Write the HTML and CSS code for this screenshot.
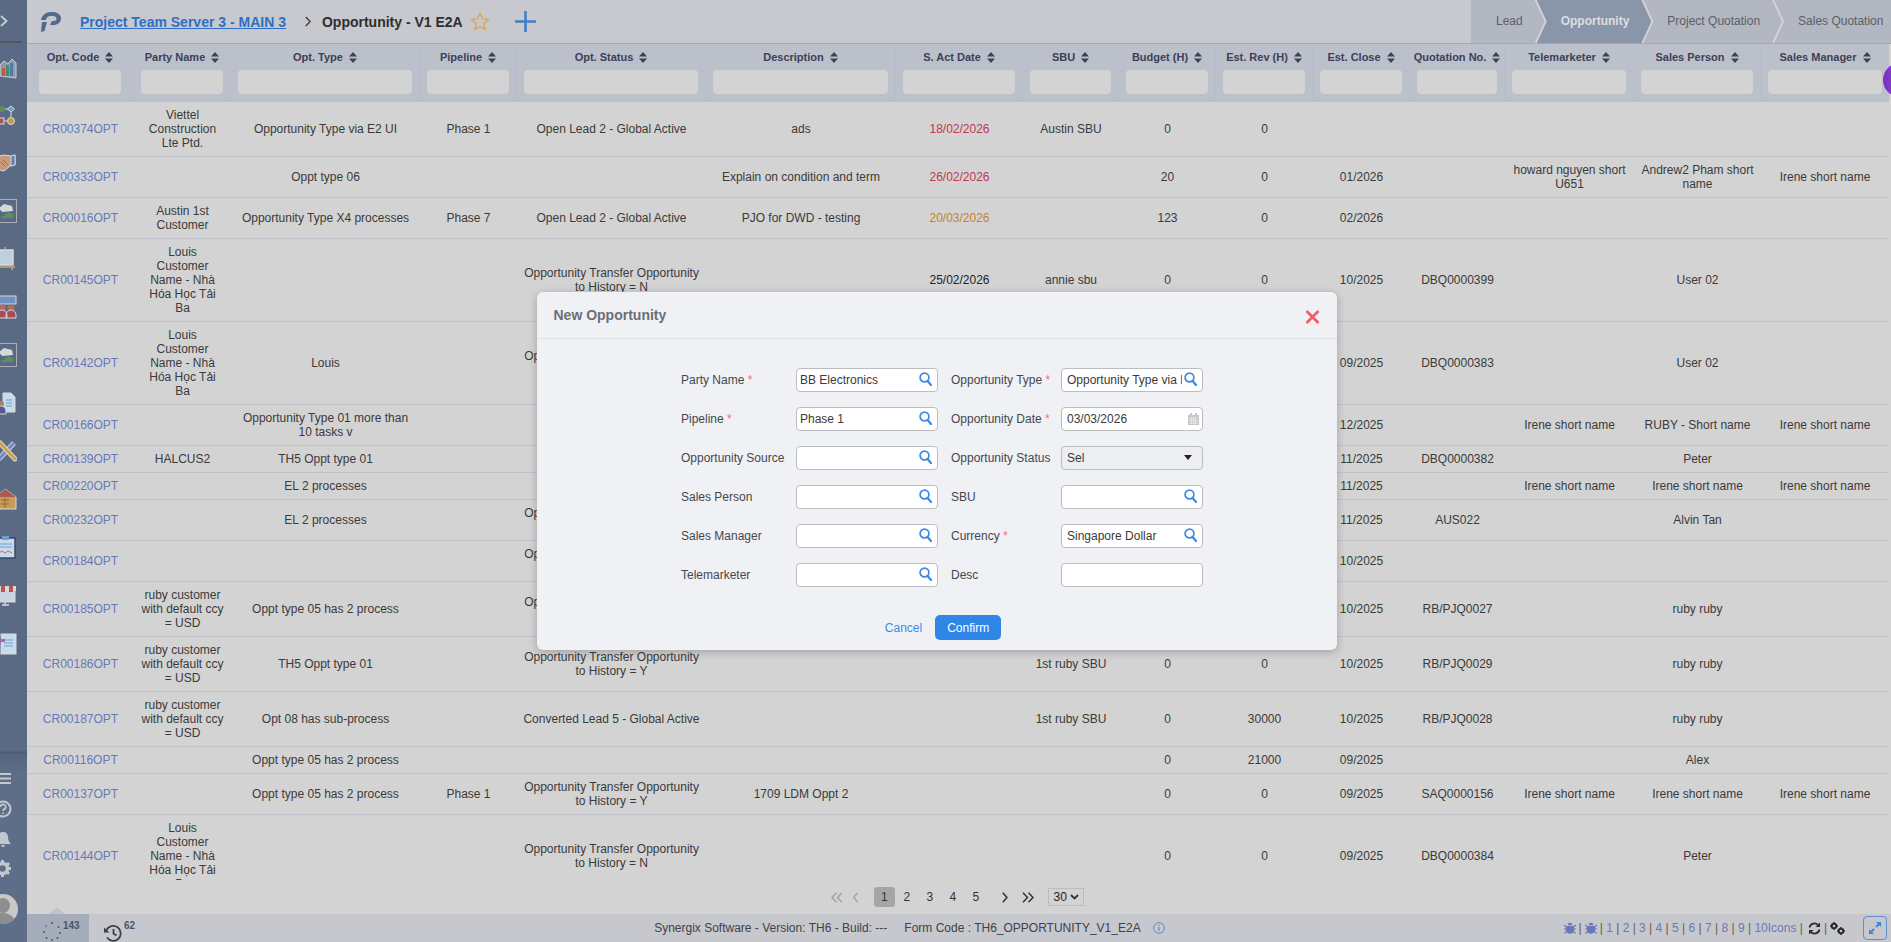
FILE: index.html
```html
<!DOCTYPE html>
<html lang="en">
<head>
<meta charset="utf-8">
<title>Opportunity - V1 E2A</title>
<link rel="stylesheet" href="styles.css">
</head>
<body>
<svg class="defs" width="0" height="0" aria-hidden="true">
  <symbol id="sort" viewBox="0 0 8 11"><path d="M4 0 8 4.6H0ZM4 11 0 6.4H8Z"/></symbol>
  <symbol id="search" viewBox="0 0 13 14"><circle cx="5.500" cy="5.500" r="4.400" fill="none" stroke="currentColor" stroke-width="1.700"/><path d="M8.400 8.800 12 13" fill="none" stroke="currentColor" stroke-width="2.200" stroke-linecap="round"/></symbol>
  <symbol id="bug" viewBox="0 0 12 12"><path d="M3.600 3.200a2.400 2.400 0 0 1 4.800 0ZM2.800 4h6.400c.6 0 1 .5 1 1v2.500a4.200 4.200 0 0 1-8.400 0V5c0-.5.4-1 1-1Z"/><path d="M0 3l2.500 2M12 3 9.500 5M0 7h2.500M12 7H9.500M.5 11.500 3 9M11.500 11.500 9 9" fill="none" stroke="currentColor" stroke-width="1.200"/></symbol>
</svg>
<div class="app">
  <aside class="sidebar">
    <div class="side-top">
      <svg class="side-arrow" width="8" height="12" viewBox="0 0 8 12"><path d="M1 1l5.500 5L1 11" fill="none" stroke="#c3c7cf" stroke-width="2"/></svg>
    </div>
    <div class="side-list">
      <div class="side-slot"><svg viewBox="0 0 24 24" width="24" height="24"><path d="M7 21V10l4-4 4 3 4-5 4 4v15Z" fill="#8f99aa" stroke="#c9ccd3"/><path d="M9 21v-8h3v8Z" fill="#b45a50"/><path d="M13 21v-11h3v11Z" fill="#4a8a62"/><path d="M17 21v-13h3v13Z" fill="#4d7bb0"/></svg></div>
      <div class="side-slot"><svg viewBox="0 0 24 24" width="24" height="24"><path d="M8 6h9M18 9v7M8 18h6" stroke="#d6d8dc" fill="none"/><circle cx="9" cy="6" r="3" fill="#5f8f5e"/><path d="M18 3l3.500 3-3.500 3-3.500-3Z" fill="#6f9fcf" stroke="#d6d8dc"/><rect x="5" y="15" width="6" height="6" fill="#b4504a" stroke="#d6d8dc"/><circle cx="18" cy="18" r="3.500" fill="#c99b3f" stroke="#d6d8dc"/></svg></div>
      <div class="side-slot"><svg viewBox="0 0 24 24" width="24" height="24"><path d="M2 6l9-2 7 1 4-1v10l-5 1-6 5-4-1-5-5Z" fill="#c99a78" stroke="#d5d7dc"/><path d="M18 5l4-1v10l-4 1Z" fill="#5a7fb8" stroke="#d5d7dc"/><path d="M8 11l4 4M10 9l5 5" stroke="#9c7355" fill="none"/></svg></div>
      <div class="side-slot"><svg viewBox="0 0 24 24" width="24" height="24"><rect x="0.500" y="0.500" width="23" height="23" fill="none" stroke="#a8adb6"/><path d="M6 9l5-4 8 2 1 5-11 1Z" fill="#d6d8dc"/><path d="M7 19l9-6 4 2v4Z" fill="#5e8f5c"/></svg></div>
      <div class="side-slot"><svg viewBox="0 0 24 24" width="24" height="24"><path d="M4 3h16v15H4Z" fill="#bcd0e0" stroke="#d8dade" stroke-width="1.500"/><path d="M12 0v3M5 18v5M19 18v5M2 20h20" stroke="#c9a56a" stroke-width="1.500" fill="none"/></svg></div>
      <div class="side-slot"><svg viewBox="0 0 24 24" width="24" height="24"><rect x="4" y="1" width="19" height="8" fill="#6f94c2" stroke="#d5d7dc"/><circle cx="9" cy="13" r="3.500" fill="#b46a5e"/><circle cx="18" cy="13" r="3.500" fill="#b46a5e"/><path d="M4 23v-3a4 4 0 0 1 10 0v3ZM13 23v-3a4 4 0 0 1 10 0v3Z" fill="#a94c55" stroke="#d5d7dc"/></svg></div>
      <div class="side-slot"><svg viewBox="0 0 24 24" width="24" height="24"><rect x="0.500" y="0.500" width="23" height="23" fill="none" stroke="#a8adb6"/><path d="M6 9l5-4 8 2 1 5-11 1Z" fill="#d6d8dc"/><path d="M7 19l9-6 4 2v4Z" fill="#5e8f5c"/></svg></div>
      <div class="side-slot"><svg viewBox="0 0 24 24" width="24" height="24"><path d="M10 2h8l4 4v15H10Z" fill="#c8dbea" stroke="#d8dade"/><path d="M13 9h6M13 12h6M13 15h6" stroke="#6f9fcf"/><circle cx="8" cy="13" r="3" fill="#b47a5e"/><path d="M3 23v-3a5 5 0 0 1 10 0v3Z" fill="#4f5f95" stroke="#d5d7dc"/></svg></div>
      <div class="side-slot"><svg viewBox="0 0 24 24" width="24" height="24"><path d="M21 4 6 20" stroke="#d6d8dc" stroke-width="5"/><path d="M21 4 6 20" stroke="#6f86c9" stroke-width="3"/><path d="M7 4l15 16" stroke="#d6d8dc" stroke-width="5" stroke-linecap="round"/><path d="M7 4l15 16" stroke="#c9a34a" stroke-width="3" stroke-linecap="round"/></svg></div>
      <div class="side-slot"><svg viewBox="0 0 24 24" width="24" height="24"><path d="M12 2 23 10v12H3V10Z" fill="#c99a58" stroke="#d8dade"/><path d="M12 2 23 10H3Z" fill="#a85c4c"/><path d="M8 13h8M8 17h8M12 11v10" stroke="#8d6a3c"/></svg></div>
      <div class="side-slot"><svg viewBox="0 0 24 24" width="24" height="24"><rect x="3" y="3" width="19" height="20" fill="#c8dbea" stroke="#3c4668" stroke-width="1.500"/><rect x="9" y="1" width="7" height="4" fill="#6f9fcf"/><path d="M6 9h13M6 12h13" stroke="#6f9fcf"/><path d="M6 18l3-2 3 2 3-2 4 2" fill="none" stroke="#c56a6a"/></svg></div>
      <div class="side-slot"><svg viewBox="0 0 24 24" width="24" height="24"><rect x="3" y="6" width="19" height="13" fill="#c8d4e0" stroke="#d8dade"/><path d="M3 3h20v5H3Z" fill="#d6d8dc"/><path d="M8 3h4v6H8ZM16 3h4v6h-4Z" fill="#c0544c"/><path d="M9 22h7M12 19v3" stroke="#d8dade" stroke-width="1.500"/></svg></div>
      <div class="side-slot"><svg viewBox="0 0 24 24" width="24" height="24"><rect x="8" y="3" width="15" height="20" fill="#c8dbea" stroke="#d8dade"/><path d="M11 9h9M11 12h9M11 15h9" stroke="#6f9fcf"/><path d="M3 9l5-4v3h4v3H8v3Z" fill="#9a6fb0"/></svg></div>
    </div>
    <div class="side-bottom">
      <svg class="side-tool" width="11" height="13" viewBox="0 0 11 13"><path d="M0 2h11M0 6.500h11M0 11h11" stroke="#c3c7cf" stroke-width="2"/></svg>
      <svg class="side-tool" width="12" height="18" viewBox="0 0 12 18"><circle cx="3" cy="9" r="7.500" fill="none" stroke="#c3c7cf" stroke-width="2"/><path d="M.5 7a2.600 2.600 0 1 1 3.500 2.400c-.8.4-1 .8-1 1.600M3 12.500v1.500" fill="none" stroke="#c3c7cf" stroke-width="1.800"/></svg>
      <svg class="side-tool" width="11" height="15" viewBox="0 0 11 15"><path d="M3 0c3 0 5 2 5 5 0 3 1 5 3 7H-5c2-2 3-4 3-7 0-3 2-5 5-5ZM1 13h4a2 2 0 0 1-4 0Z" fill="#c3c7cf"/></svg>
      <svg class="side-tool" width="11" height="17" viewBox="0 0 11 17"><circle cx="2.500" cy="8.500" r="5" fill="none" stroke="#c3c7cf" stroke-width="3.500"/><path d="M2.500 0v3M2.500 14v3M11 8.500H8M9 3 7 5M9 14l-2-2" stroke="#c3c7cf" stroke-width="3"/></svg>
      <div class="avatar"><div class="avatar-head"></div><div class="avatar-body"></div></div>
    </div>
  </aside>

  <main class="main">
    <header class="topbar">
      <svg class="logo" width="20" height="20" viewBox="0 0 20 20"><path d="M0 8C1 3 5 0 10 0h2c4 0 8 2.500 8 6.500S16.500 13 12.500 13H9l2-4h2c1.500 0 2.500-1 2.500-2.300S14 4 12 4H9.500C7 4 5.500 5.500 5 8Z" fill="#526a8c"/><path d="M1 10h5l-2.500 9-3.500 1Z" fill="#526a8c"/></svg>
      <a class="crumb-link" href="#">Project Team Server 3 - MAIN 3</a>
      <svg class="crumb-sep" width="6" height="11" viewBox="0 0 6 11"><path d="M.8 1l4.400 4.500L.8 10" fill="none" stroke="#333" stroke-width="1.200"/></svg>
      <span class="crumb-title">Opportunity - V1 E2A</span>
      <svg class="star" width="20" height="19" viewBox="0 0 20 19"><path d="M10 1.500l2.500 5.400 5.900.7-4.400 4 1.200 5.900L10 14.600l-5.200 2.900L6 11.600l-4.400-4 5.900-.7Z" fill="none" stroke="#dfa64f" stroke-width="1.400"/></svg>
      <svg class="plus" width="21" height="21" viewBox="0 0 21 21"><path d="M10.500 0v21M0 10.500h21" stroke="#3f7fc9" stroke-width="2.600"/></svg>
      <nav class="tabs">
        <span class="tab tab-first">Lead</span>
        <span class="tab tab-active">Opportunity</span>
        <span class="tab">Project Quotation</span>
        <span class="tab">Sales Quotation</span>
      </nav>
    </header>

    <section class="grid-wrap">
      <table class="grid">
        <colgroup>
          <col class="c107"><col class="c97"><col class="c189"><col class="c97"><col class="c189"><col class="c190"><col class="c127"><col class="c96"><col class="c97"><col class="c97"><col class="c97"><col class="c95"><col class="c129"><col class="c127"><col class="c128">
        </colgroup>
        <thead>
          <tr>
            <th><span class="th-label">Opt. Code<svg class="sort"><use href="#sort"/></svg></span><input class="filter"></th>
            <th><span class="th-label">Party Name<svg class="sort"><use href="#sort"/></svg></span><input class="filter"></th>
            <th><span class="th-label">Opt. Type<svg class="sort"><use href="#sort"/></svg></span><input class="filter"></th>
            <th><span class="th-label">Pipeline<svg class="sort"><use href="#sort"/></svg></span><input class="filter"></th>
            <th><span class="th-label">Opt. Status<svg class="sort"><use href="#sort"/></svg></span><input class="filter"></th>
            <th><span class="th-label">Description<svg class="sort"><use href="#sort"/></svg></span><input class="filter"></th>
            <th><span class="th-label">S. Act Date<svg class="sort"><use href="#sort"/></svg></span><input class="filter"></th>
            <th><span class="th-label">SBU<svg class="sort"><use href="#sort"/></svg></span><input class="filter"></th>
            <th><span class="th-label">Budget (H)<svg class="sort"><use href="#sort"/></svg></span><input class="filter"></th>
            <th><span class="th-label">Est. Rev (H)<svg class="sort"><use href="#sort"/></svg></span><input class="filter"></th>
            <th><span class="th-label">Est. Close<svg class="sort"><use href="#sort"/></svg></span><input class="filter"></th>
            <th><span class="th-label">Quotation No.<svg class="sort"><use href="#sort"/></svg></span><input class="filter"></th>
            <th><span class="th-label">Telemarketer<svg class="sort"><use href="#sort"/></svg></span><input class="filter"></th>
            <th><span class="th-label">Sales Person<svg class="sort"><use href="#sort"/></svg></span><input class="filter"></th>
            <th><span class="th-label">Sales Manager<svg class="sort"><use href="#sort"/></svg></span><input class="filter"></th>
          </tr>
        </thead>
        <tbody>
          <tr><td><a href="#">CR00374OPT</a></td><td>Viettel Construction Lte Ptd.</td><td>Opportunity Type via E2 UI</td><td>Phase 1</td><td>Open Lead 2 - Global Active</td><td>ads</td><td class="date-red">18/02/2026</td><td>Austin SBU</td><td>0</td><td>0</td><td></td><td></td><td></td><td></td><td></td></tr>
          <tr><td><a href="#">CR00333OPT</a></td><td></td><td>Oppt type 06</td><td></td><td></td><td>Explain on condition and term</td><td class="date-red">26/02/2026</td><td></td><td>20</td><td>0</td><td>01/2026</td><td></td><td>howard nguyen short U651</td><td>Andrew2 Pham short name</td><td>Irene short name</td></tr>
          <tr><td><a href="#">CR00016OPT</a></td><td>Austin 1st Customer</td><td>Opportunity Type X4 processes</td><td>Phase 7</td><td>Open Lead 2 - Global Active</td><td>PJO for DWD - testing</td><td class="date-orange">20/03/2026</td><td></td><td>123</td><td>0</td><td>02/2026</td><td></td><td></td><td></td><td></td></tr>
          <tr><td><a href="#">CR00145OPT</a></td><td>Louis<br>Customer<br>Name - Nhà<br>Hóa Học Tải<br>Ba</td><td></td><td></td><td>Opportunity Transfer Opportunity to History = N</td><td></td><td class="date-dark">25/02/2026</td><td>annie sbu</td><td>0</td><td>0</td><td>10/2025</td><td>DBQ0000399</td><td></td><td>User 02</td><td></td></tr>
          <tr><td><a href="#">CR00142OPT</a></td><td>Louis<br>Customer<br>Name - Nhà<br>Hóa Học Tải<br>Ba</td><td>Louis</td><td></td><td>Opportunity Transfer Opportunity to History = N</td><td></td><td></td><td></td><td></td><td></td><td>09/2025</td><td>DBQ0000383</td><td></td><td>User 02</td><td></td></tr>
          <tr><td><a href="#">CR00166OPT</a></td><td></td><td>Opportunity Type 01 more than 10 tasks v</td><td></td><td></td><td></td><td></td><td></td><td></td><td></td><td>12/2025</td><td></td><td>Irene short name</td><td>RUBY - Short name</td><td>Irene short name</td></tr>
          <tr><td><a href="#">CR00139OPT</a></td><td>HALCUS2</td><td>TH5 Oppt type 01</td><td></td><td></td><td></td><td></td><td></td><td></td><td></td><td>11/2025</td><td>DBQ0000382</td><td></td><td>Peter</td><td></td></tr>
          <tr><td><a href="#">CR00220OPT</a></td><td></td><td>EL 2 processes</td><td></td><td></td><td></td><td></td><td></td><td></td><td></td><td>11/2025</td><td></td><td>Irene short name</td><td>Irene short name</td><td>Irene short name</td></tr>
          <tr><td><a href="#">CR00232OPT</a></td><td></td><td>EL 2 processes</td><td></td><td>Opportunity Transfer Opportunity to History = N</td><td></td><td></td><td></td><td></td><td></td><td>11/2025</td><td>AUS022</td><td></td><td>Alvin Tan</td><td></td></tr>
          <tr><td><a href="#">CR00184OPT</a></td><td></td><td></td><td></td><td>Opportunity Transfer Opportunity to History = N</td><td></td><td></td><td></td><td></td><td></td><td>10/2025</td><td></td><td></td><td></td><td></td></tr>
          <tr><td><a href="#">CR00185OPT</a></td><td>ruby customer<br>with default ccy<br>= USD</td><td>Oppt type 05 has 2 process</td><td></td><td>Opportunity Transfer Opportunity to History = Y</td><td></td><td></td><td></td><td></td><td></td><td>10/2025</td><td>RB/PJQ0027</td><td></td><td>ruby ruby</td><td></td></tr>
          <tr><td><a href="#">CR00186OPT</a></td><td>ruby customer<br>with default ccy<br>= USD</td><td>TH5 Oppt type 01</td><td></td><td>Opportunity Transfer Opportunity to History = Y</td><td></td><td></td><td>1st ruby SBU</td><td>0</td><td>0</td><td>10/2025</td><td>RB/PJQ0029</td><td></td><td>ruby ruby</td><td></td></tr>
          <tr><td><a href="#">CR00187OPT</a></td><td>ruby customer<br>with default ccy<br>= USD</td><td>Opt 08 has sub-process</td><td></td><td>Converted Lead 5 - Global Active</td><td></td><td></td><td>1st ruby SBU</td><td>0</td><td>30000</td><td>10/2025</td><td>RB/PJQ0028</td><td></td><td>ruby ruby</td><td></td></tr>
          <tr><td><a href="#">CR00116OPT</a></td><td></td><td>Oppt type 05 has 2 process</td><td></td><td></td><td></td><td></td><td></td><td>0</td><td>21000</td><td>09/2025</td><td></td><td></td><td>Alex</td><td></td></tr>
          <tr><td><a href="#">CR00137OPT</a></td><td></td><td>Oppt type 05 has 2 process</td><td>Phase 1</td><td>Opportunity Transfer Opportunity to History = Y</td><td>1709 LDM Oppt 2</td><td></td><td></td><td>0</td><td>0</td><td>09/2025</td><td>SAQ0000156</td><td>Irene short name</td><td>Irene short name</td><td>Irene short name</td></tr>
          <tr><td><a href="#">CR00144OPT</a></td><td>Louis<br>Customer<br>Name - Nhà<br>Hóa Học Tải<br>Ba</td><td></td><td></td><td>Opportunity Transfer Opportunity to History = N</td><td></td><td></td><td></td><td>0</td><td>0</td><td>09/2025</td><td>DBQ0000384</td><td></td><td>Peter</td><td></td></tr>
        </tbody>
      </table>
      <div class="bubble"></div>
    </section>

    <div class="pager">
      <svg class="pg-dbl" width="12" height="11" viewBox="0 0 12 11"><path d="M5.500.8 1 5.500l4.500 4.700M11 .8 6.500 5.500l4.500 4.700" fill="none" stroke="#a3a3a3" stroke-width="1.500"/></svg>
      <svg class="pg-prev" width="5" height="11" viewBox="0 0 5 11"><path d="M4.500.8 .8 5.500l3.700 4.700" fill="none" stroke="#a3a3a3" stroke-width="1.400"/></svg>
      <span class="pg-num pg-current">1</span>
      <span class="pg-num">2</span>
      <span class="pg-num">3</span>
      <span class="pg-num">4</span>
      <span class="pg-num">5</span>
      <svg class="pg-next" width="6" height="11" viewBox="0 0 6 11"><path d="M.8.8 5 5.500.8 10.200" fill="none" stroke="#333" stroke-width="1.500"/></svg>
      <svg class="pg-last" width="12" height="11" viewBox="0 0 12 11"><path d="M1 .8l4.500 4.700L1 10.200M6.500.8 11 5.500l-4.500 4.700" fill="none" stroke="#333" stroke-width="1.500"/></svg>
      <span class="pg-size">30<svg width="9" height="6" viewBox="0 0 9 6"><path d="M1 1l3.500 3.500L8 1" fill="none" stroke="#333" stroke-width="1.800"/></svg></span>
    </div>

    <footer class="footer">
      <div class="job-box">
        <svg class="spinner" width="20" height="20" viewBox="0 0 20 20"><g fill="#4d5769"><circle cx="10" cy="2" r="1"/><circle cx="4" cy="5" r=".8"/><circle cx="16.500" cy="6" r=".9"/><circle cx="2" cy="11" r="1"/><circle cx="18" cy="12" r="1"/><circle cx="4.500" cy="17" r="1"/><circle cx="15.500" cy="17" r="1"/><circle cx="10" cy="19" r="1"/></g></svg>
        <span class="count">143</span>
      </div>
      <svg class="history" width="18" height="18" viewBox="0 0 18 18"><path d="M2.500 6A7.500 7.500 0 1 1 3 13.500" fill="none" stroke="#3d4148" stroke-width="1.800"/><path d="M0 3.500 5.500 8.500H0Z" fill="#3d4148"/><path d="M9.500 5v4.500l3 2" fill="none" stroke="#3d4148" stroke-width="1.800"/></svg>
      <span class="count">62</span>
      <span class="foot-version">Synergix Software - Version: TH6 - Build: ---</span>
      <span class="foot-code">Form Code : TH6_OPPORTUNITY_V1_E2A</span>
      <svg class="info" width="12" height="12" viewBox="0 0 12 12"><circle cx="6" cy="6" r="5.300" fill="none" stroke="#5b8ccc"/><path d="M6 5v4M6 2.700v1.200" stroke="#5b8ccc" stroke-width="1.200"/></svg>
      <div class="foot-right">
        <svg class="bug"><use href="#bug"/></svg><span class="sep">|</span>
        <svg class="bug"><use href="#bug"/></svg>
        <span class="foot-links"><span class="sep">|</span> 1 <span class="sep">|</span> 2 <span class="sep">|</span> 3 <span class="sep">|</span> 4 <span class="sep">|</span> 5 <span class="sep">|</span> 6 <span class="sep">|</span> 7 <span class="sep">|</span> 8 <span class="sep">|</span> 9 <span class="sep">|</span> 10Icons <span class="sep">|</span></span>
        <svg class="refresh" width="13" height="13" viewBox="0 0 13 13"><path d="M1.500 5.500A5 5 0 0 1 10.500 3.500M11.500 7.500A5 5 0 0 1 2.500 9.500" fill="none" stroke="#2e2e2e" stroke-width="1.800"/><path d="M12 .5v4.500H7.500ZM1 12.500V8h4.500Z" fill="#2e2e2e"/></svg>
        <span class="sep">|</span>
        <svg class="gears" width="15" height="13" viewBox="0 0 15 13"><circle cx="4" cy="4" r="2.300" fill="none" stroke="#2e2e2e" stroke-width="2"/><circle cx="11" cy="9" r="2.300" fill="none" stroke="#2e2e2e" stroke-width="2"/><path d="M4 0v1.500M4 6.500V8M0 4h1.500M6.500 4H8M11 5v1.500M11 11.500V13M7 9h1.500M13.500 9H15" stroke="#2e2e2e" stroke-width="1.500"/></svg>
        <button class="expand" type="button"><svg width="14" height="14" viewBox="0 0 14 14"><path d="M8 1h5v5ZM1 13V8l5 5Z" fill="#3f87d6"/><path d="M11 3 8 6M3 11l3-3" stroke="#3f87d6" stroke-width="2"/></svg></button>
      </div>
    </footer>
  </main>

  <div class="modal">
    <div class="modal-head">
      <span class="modal-title">New Opportunity</span>
      <svg class="modal-close" width="15" height="14" viewBox="0 0 15 14"><path d="M1.500 1 13.500 13M13.500 1 1.500 13" stroke="#ef5f67" stroke-width="2.800"/></svg>
    </div>
    <div class="form">
      <label class="f-label">Party Name <span class="req">*</span></label>
      <div class="field"><span class="val">BB Electronics</span><svg class="ico"><use href="#search"/></svg></div>
      <label class="f-label f-right">Opportunity Type <span class="req">*</span></label>
      <div class="field field-r"><span class="val">Opportunity Type via E2 UI</span><svg class="ico"><use href="#search"/></svg></div>

      <label class="f-label">Pipeline <span class="req">*</span></label>
      <div class="field"><span class="val">Phase 1</span><svg class="ico"><use href="#search"/></svg></div>
      <label class="f-label f-right">Opportunity Date <span class="req">*</span></label>
      <div class="field field-r"><span class="val">03/03/2026</span><svg class="cal" width="11" height="12" viewBox="0 0 11 12"><path d="M0 2h11v10H0ZM2 0h2v3H2ZM7 0h2v3H7Z" fill="#c6c7ca"/><path d="M1 5h9M1 7.500h9M1 10h9M3.500 4v7M5.500 4v7M7.500 4v7" stroke="#eceded" stroke-width=".8"/></svg></div>

      <label class="f-label">Opportunity Source</label>
      <div class="field"><span class="val"></span><svg class="ico"><use href="#search"/></svg></div>
      <label class="f-label f-right">Opportunity Status</label>
      <div class="field field-r field-select"><span class="val">Sel</span><svg class="caret" width="8" height="5" viewBox="0 0 8 5"><path d="M0 0h8L4 5Z" fill="#222"/></svg></div>

      <label class="f-label">Sales Person</label>
      <div class="field"><span class="val"></span><svg class="ico"><use href="#search"/></svg></div>
      <label class="f-label f-right">SBU</label>
      <div class="field field-r"><span class="val"></span><svg class="ico"><use href="#search"/></svg></div>

      <label class="f-label">Sales Manager</label>
      <div class="field"><span class="val"></span><svg class="ico"><use href="#search"/></svg></div>
      <label class="f-label f-right">Currency <span class="req">*</span></label>
      <div class="field field-r"><span class="val">Singapore Dollar</span><svg class="ico"><use href="#search"/></svg></div>

      <label class="f-label">Telemarketer</label>
      <div class="field"><span class="val"></span><svg class="ico"><use href="#search"/></svg></div>
      <label class="f-label f-right">Desc</label>
      <div class="field field-r"><span class="val"></span></div>
    </div>
    <div class="modal-foot">
      <button class="btn-cancel" type="button">Cancel</button>
      <button class="btn-confirm" type="button">Confirm</button>
    </div>
  </div>
</div>
</body>
</html>
```

FILE: styles.css
```css
* { box-sizing: border-box; }
html, body { margin: 0; height: 100%; overflow: hidden; }
body { font: 12px/14px "Liberation Sans", Arial, sans-serif; color: #3a3a3a; background: #d3d3d3; }
a { color: inherit; }
.defs { position: absolute; }
.app { display: flex; height: 942px; overflow: hidden; position: relative; }

/* sidebar */
.sidebar { width: 27px; flex: none; background: #5a6a85; display: flex; flex-direction: column; overflow: hidden; }
.side-top { height: 43px; margin-right: 5px; border-bottom: 2px solid #55565c; display: flex; align-items: center; flex: none; }
.side-list { flex: none; }
.side-slot { height: 48px; display: flex; align-items: center; margin-left: -7px; }
.side-slot svg { display: block; }
.side-bottom { margin-top: auto; height: 189px; background: linear-gradient(#55647e, #5e6e88 20px); box-shadow: 0 -1px 2px rgba(60,60,70,.45); padding-top: 19px; display: flex; flex-direction: column; align-items: flex-start; }
.side-tool { display: block; overflow: hidden; }
.side-tool:nth-child(1) { margin-bottom: 15px; }
.side-tool:nth-child(2) { margin-bottom: 14px; }
.side-tool:nth-child(3) { margin-bottom: 13px; }
.side-tool:nth-child(4) { margin-bottom: 17px; }
.avatar { width: 30px; height: 30px; margin-left: -12px; border-radius: 50%; background: #c9c9c9; position: relative; overflow: hidden; flex: none; }
.avatar-head { position: absolute; left: 8px; top: 4px; width: 14px; height: 15px; border-radius: 50%; background: #8e8e8e; }
.avatar-body { position: absolute; left: 3px; top: 19px; width: 24px; height: 18px; border-radius: 50%; background: #8e8e8e; }

/* main column */
.main { flex: 1; min-width: 0; display: flex; flex-direction: column; height: 942px; }
.topbar { height: 44px; flex: none; background: #c7c9ce; border-bottom: 1px solid #a6a8ad; display: flex; align-items: center; }
.logo { margin-left: 14px; flex: none; }
.crumb-link { margin-left: 19px; font-size: 14px; font-weight: bold; color: #2f6fc6; text-decoration: underline; white-space: nowrap; }
.crumb-sep { margin-left: 19px; flex: none; }
.crumb-title { margin-left: 11px; font-size: 14px; font-weight: bold; color: #2e2e2e; white-space: nowrap; }
.star { margin-left: 7px; flex: none; }
.plus { margin-left: 25px; flex: none; }
.tabs { margin-left: auto; width: 420px; height: 43px; display: flex; overflow: hidden; background: #d4d5d8; flex: none; }
.tab { flex: none; height: 43px; line-height: 43px; padding: 0 22px 0 24px; margin-left: -8px; background: #b2b7c1; color: #5c6066; white-space: nowrap; clip-path: polygon(0 0, calc(100% - 10px) 0, 100% 50%, calc(100% - 10px) 100%, 0 100%, 10px 50%); }
.tab-first { margin-left: 0; padding-left: 25px; clip-path: polygon(0 0, calc(100% - 10px) 0, 100% 50%, calc(100% - 10px) 100%, 0 100%); }
.tab-active { background: #8995a9; color: #dcdee2; font-weight: bold; }

/* grid */
.grid-wrap { flex: 1; min-height: 0; overflow: hidden; position: relative; }
.grid { width: 1862px; table-layout: fixed; border-collapse: separate; border-spacing: 0; }
.c95 { width: 95px; } .c96 { width: 96px; } .c97 { width: 97px; } .c107 { width: 107px; } .c127 { width: 127px; } .c128 { width: 128px; } .c129 { width: 129px; } .c189 { width: 189px; } .c190 { width: 190px; }
.grid th { background: #bcc0ca; padding: 6px 7px 8px; font-size: 11px; font-weight: bold; color: #3a4159; text-align: center; border-right: 1px solid #b8bcc6; }
.grid th:first-child { padding-left: 12px; padding-right: 12px; }
.grid th:last-child { border-right: 0; }
.th-label { display: flex; justify-content: center; align-items: center; height: 14px; white-space: nowrap; }
.sort { width: 8px; height: 11px; margin-left: 6px; fill: #3c4257; flex: none; }
.filter { display: block; width: 100%; height: 24px; margin-top: 6px; border: 0; border-radius: 4px; background: #d3d3d3; }
.grid td { padding: 6px 5px; text-align: center; vertical-align: middle; border-bottom: 1px solid #bfc2cc; line-height: 14px; }
.grid td a { color: #6679ba; text-decoration: none; }
.date-red { color: #bb3a50; }
.date-orange { color: #c9821e; }
.date-dark { color: #1f2228; }
.bubble { position: absolute; right: -26px; top: 19px; width: 34px; height: 34px; border-radius: 50%; background: linear-gradient(90deg, #7a2fc4, #9a5cd6); }

/* pager */
.pager { height: 34px; flex: none; background: #d3d3d3; display: flex; align-items: center; justify-content: center; padding-right: 3px; color: #333; position: relative; }
.pg-dbl, .pg-prev, .pg-next, .pg-last { flex: none; }
.pg-prev { margin-left: 10px; }
.pg-next { margin-left: 15px; }
.pg-last { margin-left: 14px; }
.pg-num { width: 23px; text-align: center; line-height: 20px; }
.pg-current { width: 21px; margin-left: 16px; margin-right: .5px; background: #a6a6a6; border-radius: 3px; }
.pg-size { margin-left: 14px; width: 36px; height: 18px; border: 1px solid #bcbcbc; display: flex; align-items: center; justify-content: center; gap: 3px; color: #222; }

/* footer */
.footer { height: 28px; flex: none; background: #c6c8cd; display: flex; align-items: center; color: #3f4246; position: relative; }
.job-box { width: 62px; height: 28px; flex: none; background: #a5adbb; position: relative; display: flex; padding: 7px 0 0 15px; }
.job-box::before { content: ""; position: absolute; left: 22px; top: -7px; border: 8px solid transparent; border-top: 0; border-bottom: 7px solid #bfc3cc; }
.spinner { flex: none; }
.count { font-size: 10px; font-weight: bold; line-height: 12px; color: #4d5463; align-self: flex-start; margin: 0 0 0 1px; }
.job-box .count { margin-top: -1px; }
.footer > .count { margin-top: 6px; margin-left: 2px; }
.history { margin: 10px 0 0 15px; flex: none; }
.foot-version { margin-left: 519px; white-space: nowrap; }
.foot-code { margin-left: 17px; white-space: nowrap; }
.info { margin-left: 12px; flex: none; }
.foot-right { margin-left: auto; display: flex; align-items: center; gap: 3px; padding-right: 4px; color: #6a78b8; white-space: pre; }
.sep { color: #6b5a48; }
.bug { width: 12px; height: 12px; fill: #6a78b8; color: #6a78b8; flex: none; }
.refresh { margin-left: 2px; flex: none; }
.gears { flex: none; }
.expand { margin-left: 15px; width: 24px; height: 24px; padding: 0; border: 1px solid #5a8fd0; border-radius: 4px; background: transparent; display: flex; align-items: center; justify-content: center; }

/* modal */
.modal { position: absolute; left: 537px; top: 292px; width: 800px; height: 358px; background: #f0f1f5; border-radius: 6px; box-shadow: 0 2px 8px rgba(0,0,0,.25); }
.modal-head { height: 47px; border-bottom: 1px solid #e1e2e6; display: flex; align-items: center; justify-content: space-between; padding: 0 17px 0 16.500px; }
.modal-title { font-size: 14px; font-weight: bold; color: #6c6f76; }
.modal-close { margin-top: 3px; flex: none; }
.form { display: grid; grid-template-columns: 115px 142px 123px 142px; grid-auto-rows: 24px; row-gap: 15px; padding: 29px 0 0 144px; align-items: center; }
.f-label { color: #44474d; white-space: nowrap; }
.f-right { padding-left: 13px; }
.req { color: #ef6f78; }
.field { height: 24px; background: #fff; border: 1px solid #bcbdc0; border-radius: 4px; display: flex; align-items: flex-start; padding-left: 3px; color: #3a3a3a; }
.field-r { padding-left: 5px; }
.val { flex: 1; min-width: 0; overflow: hidden; white-space: nowrap; line-height: 22px; }
.ico { width: 13px; height: 14px; margin: 3px 5px 0 2px; color: #3b8ae6; flex: none; }
.cal { margin: 5px 3px 0 2px; flex: none; }
.field-select { background: #edeef2; }
.caret { margin: 8px 10px 0 2px; flex: none; }
.modal-foot { display: flex; justify-content: center; align-items: center; gap: 13px; padding: 28px 0 0 12px; }
.btn-cancel { padding: 0; border: 0; background: none; font: inherit; color: #3b8ae6; }
.btn-confirm { width: 66px; height: 25px; padding: 0; border: 0; border-radius: 5px; background: #2f86e6; font: inherit; color: #fff; }
```
